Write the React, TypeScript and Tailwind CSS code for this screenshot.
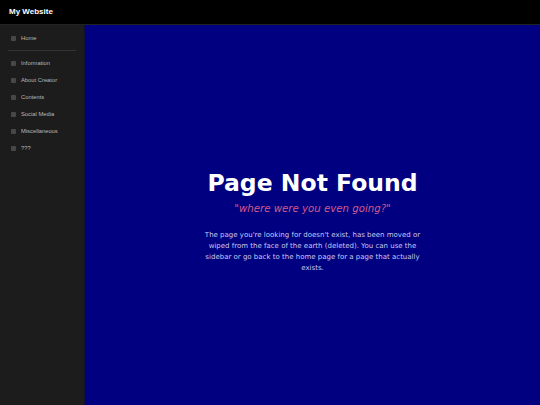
import React from "react";

const items = ["Information", "About Creator", "Contents", "Social Media", "Miscellaneous", "???"];

function Item({ label }: { label: string }) {
  return (
    <div className="flex items-center h-[17px] pl-[11px] gap-[5px]">
      <span className="w-[5px] h-[5px] bg-[#474747] rounded-[1px]" />
      <span className="text-[5.8px] text-[#b8b8b8]" style={{ fontFamily: '"Liberation Sans", Arial, sans-serif' }}>{label}</span>
    </div>
  );
}

export default function App() {
  return (
    <div className="w-[540px] h-[405px] flex flex-col bg-black overflow-hidden" style={{ fontFamily: '"DejaVu Sans", Verdana, sans-serif' }}>
      <header className="h-[25px] shrink-0 flex items-center pl-[9px] bg-black border-b border-[#222]">
        <span className="text-[8px] font-bold text-white" style={{ fontFamily: '"Liberation Sans", Arial, sans-serif' }}>My Website</span>
      </header>
      <div className="flex flex-1 min-h-0">
        <aside className="w-[85px] shrink-0 bg-[#1c1c1c] border-r border-[#101030] pt-[5px]">
          <Item label="Home" />
          <div className="mx-[8px] my-[3px] h-px bg-[#333]" />
          <div className="pt-[1px]">
            {items.map((l) => (
              <Item key={l} label={l} />
            ))}
          </div>
        </aside>
        <main className="flex-1 bg-[#000080] flex flex-col items-center justify-center pt-[12px]">
          <h1 className="text-[23.5px] font-bold text-white leading-[28px]">Page Not Found</h1>
          <p className="text-[10.2px] italic text-[#d05a8c] mt-[5px] leading-[13px]">"where were you even going?"</p>
          <p className="text-[7px] text-[#c8c8f0] text-center w-[222px] leading-[11px] mt-[15px]">
            The page you're looking for doesn't exist, has been moved or wiped from the face of the earth (deleted). You can use the sidebar or go back to the home page for a page that actually exists.
          </p>
        </main>
      </div>
    </div>
  );
}
